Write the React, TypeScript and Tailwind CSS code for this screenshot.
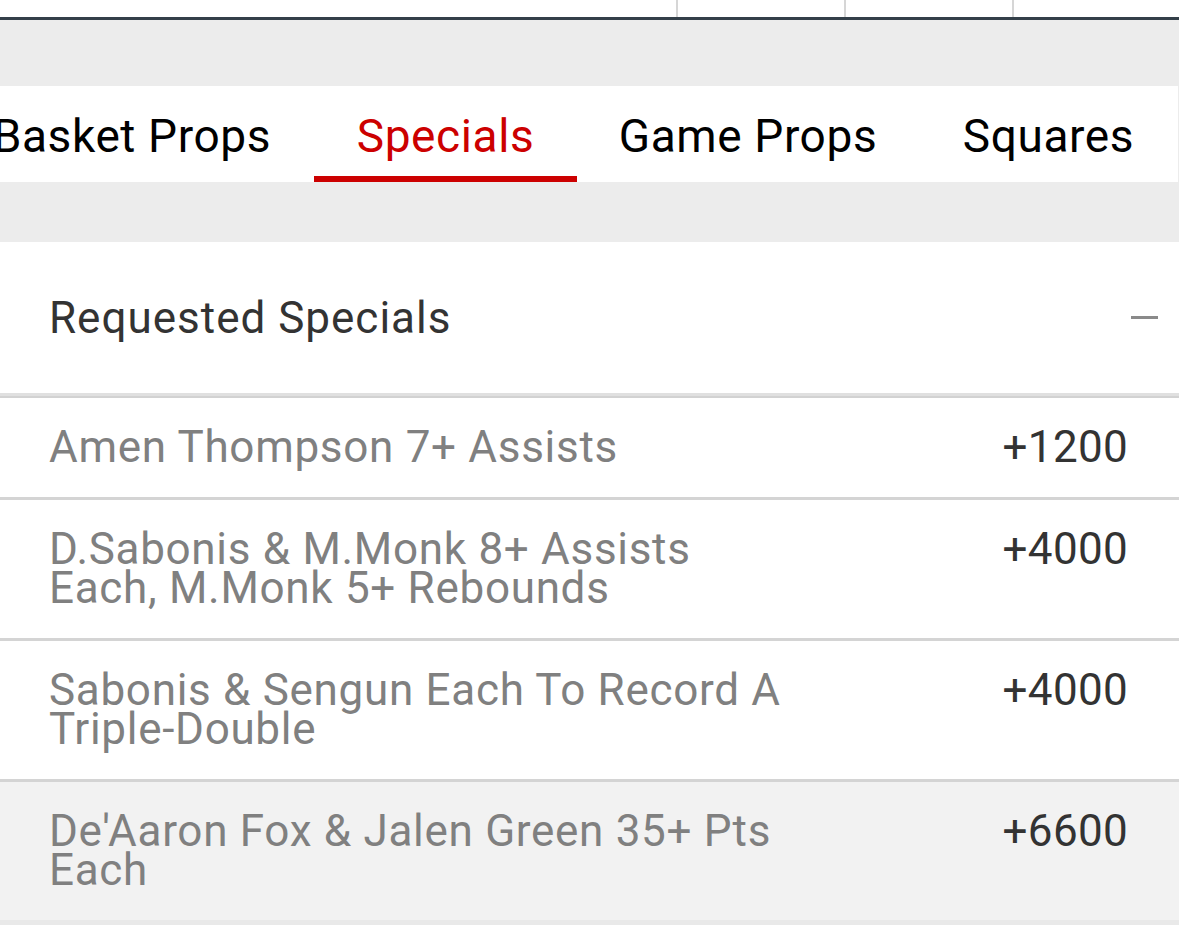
import React from 'react';

const tabs = [
  { label: 'Basket Props', width: '' },
  { label: 'Specials', width: 'w-[263px]', active: true },
  { label: 'Game Props', width: 'w-[342px]' },
  { label: 'Squares', width: 'w-[259px]' },
];

const specials = [
  { lines: ['Amen Thompson 7+ Assists'], odds: '+1200' },
  { lines: ['D.Sabonis & M.Monk 8+ Assists', 'Each, M.Monk 5+ Rebounds'], odds: '+4000' },
  { lines: ['Sabonis & Sengun Each To Record A', 'Triple-Double'], odds: '+4000' },
  { lines: ["De'Aaron Fox & Jalen Green 35+ Pts", 'Each'], odds: '+6600', shaded: true },
];

export default function App() {
  return (
    <div className="w-[1179px] h-[949px] bg-white overflow-hidden font-['Roboto',sans-serif]">
      {/* bottom of the odds table above */}
      <div className="flex h-[17px] bg-white">
        <div className="flex-1" />
        <div className="w-[168px] border-l-2 border-[#d6d6d6]" />
        <div className="w-[168px] border-l-2 border-[#d6d6d6]" />
        <div className="w-[167px] border-l-2 border-[#d6d6d6]" />
      </div>
      <div className="h-[3px] bg-[#343f49]" />
      <div className="h-[66px] bg-[#ececec]" />

      <div className="bg-[#ececec]">
        <div className="flex justify-end h-[96px] bg-white overflow-hidden mr-[1px]">
          {tabs.map((tab) => (
            <div
              key={tab.label}
              className={`relative shrink-0 flex items-center justify-center pt-[4px] text-[46px] tracking-[0.6px] whitespace-nowrap ${
                tab.width || 'px-[43px]'
              } ${tab.active ? 'text-[#cc0000]' : 'text-black'}`}
            >
              {tab.label}
              {tab.active && (
                <div className="absolute left-0 right-0 bottom-0 h-[6px] bg-[#cc0000]" />
              )}
            </div>
          ))}
        </div>
      </div>
      <div className="h-[60px] bg-[#ececec]" />

      <div className="bg-white">
        <div className="flex items-center justify-between h-[151px] pl-[49px] pr-[21px]">
          <div className="text-[44px] tracking-[1px] text-[#333333] leading-none">Requested Specials</div>
          <div className="w-[27px] h-[3px] bg-[#8a8a8a]" />
        </div>
        <div className="h-[3px] bg-[#e0e0e0]" />
        <div className="h-[2px] bg-[#d2d2d2]" />

        {specials.map((row, i) => (
          <div
            key={i}
            className={`flex items-start justify-between pl-[49px] pr-[51px] py-[30px] text-[44px] leading-[39px] ${
              row.shaded
                ? 'bg-[#f2f2f2] border-b-[5px] border-[#e9e9e9]'
                : 'bg-white border-b-[3px] border-[#d4d4d4]'
            }`}
          >
            <div className="text-[#808080] tracking-[0.7px]">
              {row.lines.map((line) => (
                <div key={line} className="whitespace-nowrap">
                  {line}
                </div>
              ))}
            </div>
            <div className="text-[#333333] tracking-[0.3px]">{row.odds}</div>
          </div>
        ))}
      </div>
    </div>
  );
}
